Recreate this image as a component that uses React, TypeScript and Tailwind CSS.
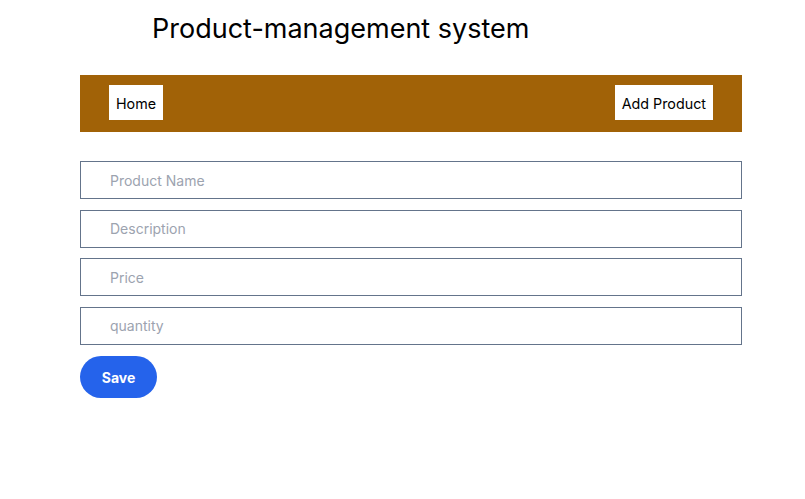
export default function App() {
  const fields = ['Product Name', 'Description', 'Price', 'quantity'];

  return (
    <div className="w-[805px] h-[499px] bg-white font-['Inter',sans-serif] text-black">
      <div className="mx-[80px] w-[662px]">
        <h1 className="pt-[12px] pl-[72px] text-[27px] leading-[34px] font-normal">
          Product-management system
        </h1>
        <nav className="mt-[29px] h-[57px] bg-[#a16207] flex items-start justify-between px-[29px] pt-[10px]">
          <button className="bg-white h-[35px] px-[7px] text-[14.3px] leading-[37px]">Home</button>
          <button className="bg-white h-[35px] px-[7px] text-[14.3px] leading-[37px]">Add Product</button>
        </nav>
        <form
          className="mt-[29px] flex flex-col gap-[10.6px]"
          onSubmit={e => e.preventDefault()}
        >
          {fields.map(f => (
            <input
              key={f}
              type="text"
              placeholder={f}
              className="h-[38px] w-full border border-[#64748b] pl-[29px] text-[14px] outline-none placeholder:text-[#9ca3af]"
            />
          ))}
          <div>
            <button
              type="submit"
              className="mt-[1px] h-[42px] w-[77px] rounded-full bg-[#2563eb] text-white text-[14px] font-bold"
            >
              Save
            </button>
          </div>
        </form>
      </div>
    </div>
  );
}
